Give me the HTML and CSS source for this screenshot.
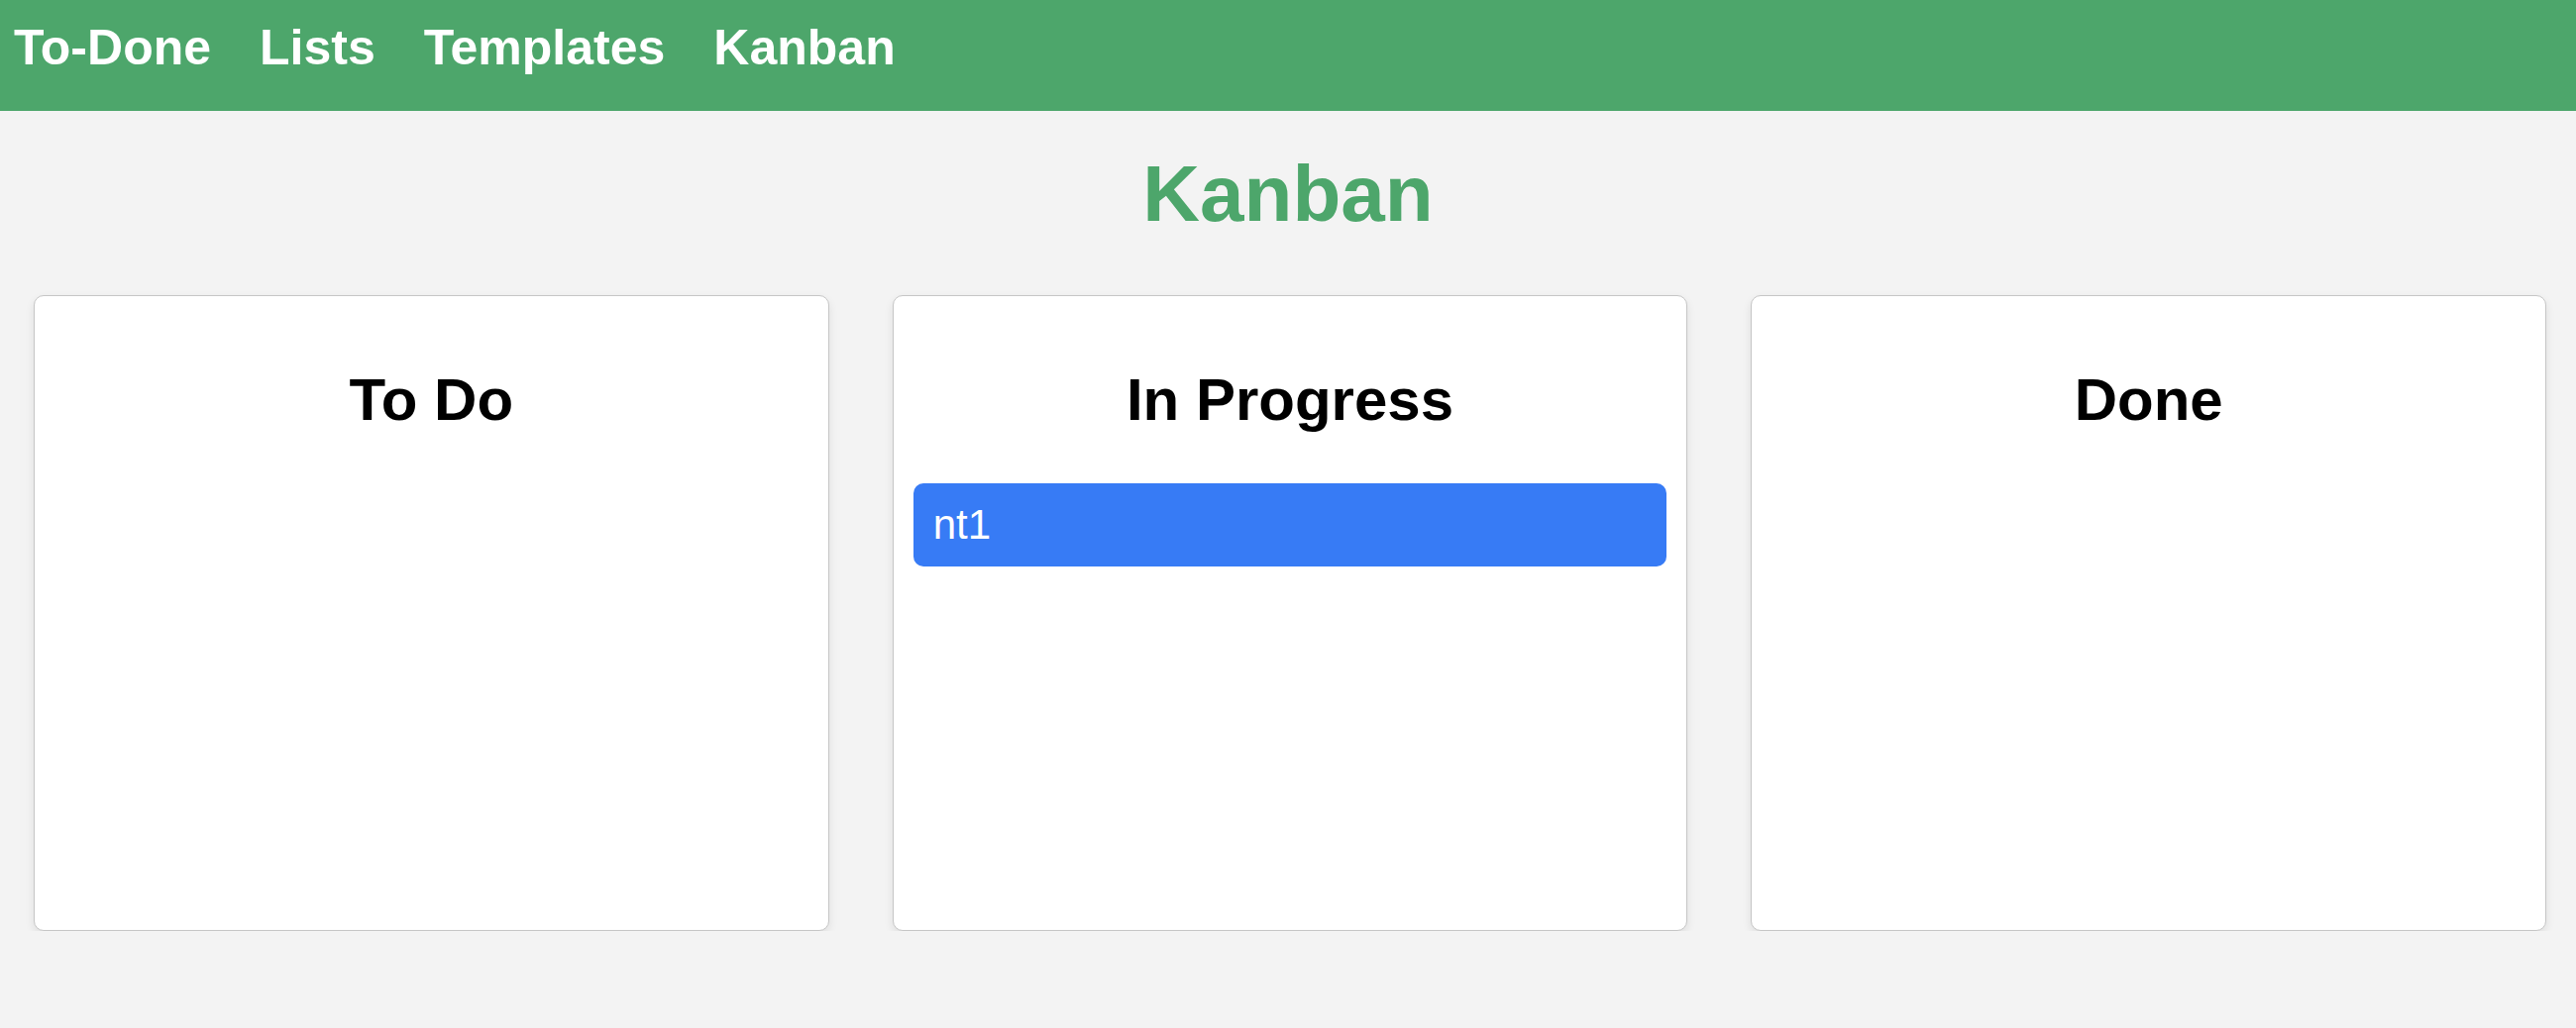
FILE: index.html
```html
<!DOCTYPE html>
<html lang="en">
<head>
<meta charset="utf-8">
<title>Kanban</title>
<link rel="stylesheet" href="styles.css">
</head>
<body>
  <nav class="topnav">
    <a class="nav-link" href="#">To-Done</a>
    <a class="nav-link" href="#">Lists</a>
    <a class="nav-link" href="#">Templates</a>
    <a class="nav-link" href="#">Kanban</a>
  </nav>
  <main class="page">
    <h1 class="page-title">Kanban</h1>
    <div class="board">
      <section class="column">
        <h2 class="column-title">To Do</h2>
      </section>
      <section class="column">
        <h2 class="column-title">In Progress</h2>
        <div class="task">nt1</div>
      </section>
      <section class="column">
        <h2 class="column-title">Done</h2>
      </section>
    </div>
  </main>
</body>
</html>
```

FILE: styles.css
```css
html, body {
  margin: 0;
  padding: 0;
}

body {
  background: #f3f3f3;
  font-family: "Liberation Sans", Arial, Helvetica, sans-serif;
  color: #000;
}

.topnav {
  box-sizing: border-box;
  height: 112px;
  background: #4da66b;
  display: flex;
  align-items: flex-start;
  gap: 49px;
  padding: 19px 0 0 14px;
}

.nav-link {
  color: #fff;
  font-weight: bold;
  font-size: 50px;
  text-decoration: none;
  line-height: normal;
}

.page-title {
  margin: 38px 0 56px;
  text-align: center;
  color: #4da66b;
  font-size: 80px;
  font-weight: bold;
  line-height: normal;
}

.board {
  display: flex;
  gap: 64px;
  padding: 0 30px 0 34px;
}

.column {
  flex: 1;
  box-sizing: border-box;
  height: 642px;
  background: #fff;
  border: 1px solid #c6c6c6;
  border-radius: 10px;
  box-shadow: 0 4px 10px rgba(0, 0, 0, 0.09);
  padding: 20px;
}

.column-title {
  margin: 50px 0;
  text-align: center;
  font-size: 60px;
  font-weight: bold;
  line-height: normal;
}

.task {
  background: #377bf5;
  color: #fff;
  font-size: 42px;
  line-height: normal;
  padding: 18px 20px;
  border-radius: 10px;
}
```
